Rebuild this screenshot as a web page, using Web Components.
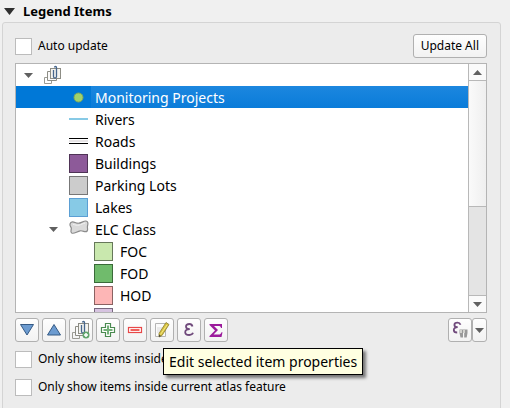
<!DOCTYPE html>
<html lang="en">
<head>
<meta charset="utf-8">
<title>Legend Items</title>
<style>
html { background: #f0f0f0; }
body { margin: 0; font: 12px/18px "Noto Sans", sans-serif; color: #000; overflow: hidden; }
</style>
</head>
<body>
<legend-panel></legend-panel>
<script>
const define = (name, html, setup) => customElements.define(name, class extends HTMLElement {
  constructor() {
    super();
    this.attachShadow({ mode: 'open' });
  }
  connectedCallback() {
    if (this.shadowRoot.childNodes.length) return;
    const t = document.createElement('template');
    t.innerHTML = '<style>*{box-sizing:border-box}</style>' + (typeof html === 'function' ? html(this) : html);
    this.shadowRoot.append(t.content.cloneNode(true));
    if (setup) setup(this);
  }
});

const clip = `<path d="M3 11.500H.5v6h7V15" fill="none" stroke="#9b9b94"/>
  <path d="M3.500 5.500v9h9v-2h-6v-7z" fill="#fafafa" stroke="#8d8d85"/>
  <rect x="6.500" y="2.500" width="10" height="10" fill="#f4f4f0" stroke="#8d8d85"/>
  <path d="M9.500 4v6.500a1.500 1.500 0 0 0 3 0v-9a1 1 0 0 0-2 0" fill="none" stroke="#46668c" stroke-width="1.300"/>`;

const icons = {
  down: `<path d="M2.500 3.500h13L9 14z" fill="#6c9bd0" stroke="#355a85"/>`,
  up: `<path d="M9 3.500l6.500 10.500h-13z" fill="#6c9bd0" stroke="#355a85"/>`,
  group: clip,
  groupadd: clip + `<circle cx="14" cy="14" r="3.500" fill="#62a56c"/><path d="M14 12v4M12 14h4" stroke="#fff" stroke-width="1.500"/>`,
  plus: `<path d="M6.500 2.500h5v4h4v5h-4v4h-5v-4h-4v-5h4z" fill="#fff" stroke="#4a8a50" stroke-width="1.200"/><path d="M9 4.500v9M4.500 9h9" stroke="#73b078" stroke-width="2"/>`,
  minus: `<rect x="2.500" y="6.500" width="13" height="5" fill="#fff" stroke="#e84848" stroke-width="1.200"/><path d="M4.500 9h9" stroke="#f0605c" stroke-width="2"/>`,
  edit: `<path d="M2.500 2.500h10v13h-10z" fill="#fbfbfb" stroke="#b5b5b5"/><path d="M4 7h6M4 9h5M4 11h4" stroke="#dadada"/><path d="M13 1.500l3 2-7 11-3 1.500V12.500z" fill="#d8c33e" stroke="#8c7c30" stroke-width=".8"/><path d="M14 4l-6.500 9.500" stroke="#f5e889"/><path d="M6 13.500V16l2-1z" fill="#444"/>`,
  epsilon: `<path d="M12.500 5.500C12 3.600 11 3 9.500 3 7.300 3 6 4.200 6 5.600S7.300 8.200 9.800 8.200C6.700 8.200 5.200 9.400 5.200 11.200S6.800 14 9.300 14 12.500 13.200 13 11.800" fill="none" stroke="#704a7c" stroke-width="1.800"/>`,
  sigma: `<path d="M2.500 3h12.500v4h-1c-.3-1.600-1-2-2.500-2H7l4 4-4.500 4.500h5c1.700 0 2.500-.8 3-2.300h1L14.500 16h-12v-1L8 9.500 2.500 4z" fill="#9c1b9c"/>`,
  epsilondata: `<path d="M9.500 3.800C8.900 2 7.800 1.700 6.500 1.700 4.500 1.700 3.400 2.700 3.400 4S4.600 6.200 6.700 6.200C4 6.200 2.800 7.200 2.800 8.900S4.200 11.500 6.200 11.500" fill="none" stroke="#704a7c" stroke-width="1.800"/><path d="M8.500 8.500h8v3.500l-.8 4.500h-2.500v-4.500H12v4.500H9.500l-1-4.500z" fill="#999"/><path d="M10 9v3M13 9v3" stroke="#e4e4de" stroke-width="1.500"/>`,
  polygon: `<path d="M1 4c1-3.500 4.500-1.600 7-.9 3.500 1 6-2.400 9-2.100 2.500.3 2 3 1.500 5s.8 3.500-.3 5c-1.700 2-4-.6-7-.2-3.200.4-6.200 3.600-8.500 2.200-1.800-1.200-.2-3-.4-4.800C2 6.700.5 5.800 1 4z" fill="#dadada" stroke="#8b8b8b" stroke-width="1.200"/><path d="M4 4.500c2 .2 4 1.200 6 .7s4-2 6-2" fill="none" stroke="#f1f1f1"/>`
};

define('tool-icon', el => `<style>:host{display:block;flex:none;width:18px;height:18px}svg{display:block;overflow:visible}</style>
<svg width="18" height="18" viewBox="0 0 18 18" aria-hidden="true">${icons[el.getAttribute('name')]}</svg>`);

define('caret-mark', `<style>:host{display:block;flex:none;width:9px;height:5px;color:#606060}:host([up]){transform:scaleY(-1)}:host([large]){width:11px;height:7px;color:#303030}svg{display:block;width:100%;height:100%}</style>
<svg viewBox="0 0 10 6" preserveAspectRatio="none" aria-hidden="true"><path d="M0 0h10L5 6z" fill="currentColor"/></svg>`);

define('push-button', el => `<style>
:host{display:block;flex:none}
button{display:flex;align-items:center;justify-content:center;width:100%;min-width:24px;height:24px;padding:0 2px;margin:0;font:inherit;color:inherit;border:1px solid #b0b0b0;border-radius:3px;background:linear-gradient(#fefefe,#f2f2f2)}
:host([text]) button{padding:0 7px}
:host([narrow]) button{min-width:15px;padding:0}
</style><button type="button" aria-label="${el.getAttribute('label')}"><slot></slot></button>`);

define('check-option', `<style>
:host{display:block}
label{display:flex;align-items:center;gap:6px;white-space:nowrap}
input{appearance:none;flex:none;width:17px;height:17px;margin:0;background:#fff;border:1px solid #bcbcbc}
input:checked{background:#0078d7}
</style><label><input type="checkbox"><span><slot></slot></span></label>`);

define('legend-symbol', el => {
  const k = el.getAttribute('kind');
  const art = {
    point: '<circle cx="9.500" cy="9.500" r="4.500" fill="#a0d26c" stroke="#80a85c"/>',
    line: '<path d="M0 9h19" stroke="#87cae6" stroke-width="2"/>',
    road: '<path d="M0 9h19" stroke="#d0cacd"/><path d="M0 6.500h19M0 11.500h19" stroke="#000" stroke-width="1.200"/>',
    fill: '<rect x=".5" y=".5" width="18" height="18" fill="var(--fill)" stroke="var(--edge)"/>',
    polygon: icons.polygon
  }[k];
  return `<style>:host{display:block;flex:none;width:19px;height:19px;margin-top:1px}svg{display:block;overflow:visible}</style><svg width="19" height="19" viewBox="0 0 19 19" aria-hidden="true">${art}</svg>`;
});

define('tree-row', `<style>
:host{display:flex;align-items:center;height:22px;padding-left:calc(var(--level,0)*25px + 8px);font:14px/24px "Noto Sans",sans-serif;white-space:nowrap}
.mark{flex:none;display:flex;width:20px}
.name{flex:1;padding-left:4px;margin-left:3px;height:22px}
:host([selected]){background:#0078d7;color:#fff}
:host([selected]) .name{background:linear-gradient(#1c87df,#0a7cd9)}
</style><span class="mark"><slot name="mark"></slot></span><slot name="icon"></slot><span class="name"><slot></slot></span>`,
el => el.setAttribute('role', 'treeitem'));

define('scroll-strip', `<style>
:host{display:flex;flex-direction:column;flex:none;width:18px;border-left:1px solid #b8b8b8;background:#e4e4e4}
button{flex:none;display:flex;align-items:center;justify-content:center;height:17px;padding:0;margin:0;border:0;border-bottom:1px solid #b8b8b8;background:#fafafa}
button:last-child{border-bottom:0;border-top:1px solid #b8b8b8}
.track{flex:1}
.thumb{height:59%;border-bottom:1px solid #b8b8b8;background:linear-gradient(90deg,#fafafa,#efefef)}
</style><button type="button" aria-label="Scroll up"><caret-mark up></caret-mark></button><div class="track"><div class="thumb"></div></div><button type="button" aria-label="Scroll down"><caret-mark></caret-mark></button>`);

define('legend-tree', `<style>
:host{display:flex;height:250px;box-sizing:border-box;background:#fff;border:1px solid #b4b4b4}
.rows{flex:1;min-width:0;overflow:hidden}
</style><div class="rows" role="tree" aria-label="Legend items"><slot></slot></div><scroll-strip></scroll-strip>`);

define('hover-tip', `<style>
:host{display:block;padding:1px 5px 0;font:14px/24px "Noto Sans",sans-serif;white-space:nowrap;background:#ffffe1;border:1px solid #000;box-shadow:3px 3px 3px rgba(0,0,0,.5)}
</style><slot></slot>`);

define('legend-panel', `<style>
:host{display:block;padding:1px 9px 0 2px}
h2{display:flex;align-items:center;gap:8px;margin:0;padding:0 2px;font-size:13px;font-weight:bold;line-height:20px}
section{margin-top:1px;padding:11px 13px 24px 12px;background:#ececec;border:1px solid #d4d4d4;border-radius:3px}
.top{display:flex;justify-content:space-between;align-items:center;margin-bottom:5px}
.tools{display:flex;gap:3px;margin:5px 0 8px}
.data{display:flex;margin-left:auto}
.options{position:relative;display:grid;gap:10px}
hover-tip{position:absolute;left:148px;top:-2px}
</style>
<h2><caret-mark large></caret-mark>Legend Items</h2>
<section>
<div class="top"><check-option>Auto update</check-option><push-button text label="Update All">Update All</push-button></div>
<legend-tree>
<tree-row><caret-mark slot="mark"></caret-mark><tool-icon slot="icon" name="group"></tool-icon></tree-row>
<tree-row selected style="--level:1"><legend-symbol slot="icon" kind="point"></legend-symbol>Monitoring Projects</tree-row>
<tree-row style="--level:1"><legend-symbol slot="icon" kind="line"></legend-symbol>Rivers</tree-row>
<tree-row style="--level:1"><legend-symbol slot="icon" kind="road"></legend-symbol>Roads</tree-row>
<tree-row style="--level:1"><legend-symbol slot="icon" kind="fill" style="--fill:#8d5a99;--edge:#4f3356"></legend-symbol>Buildings</tree-row>
<tree-row style="--level:1"><legend-symbol slot="icon" kind="fill" style="--fill:#cccccc;--edge:#777"></legend-symbol>Parking Lots</tree-row>
<tree-row style="--level:1"><legend-symbol slot="icon" kind="fill" style="--fill:#87cae6;--edge:#5b9fd4"></legend-symbol>Lakes</tree-row>
<tree-row style="--level:1"><caret-mark slot="mark"></caret-mark><legend-symbol slot="icon" kind="polygon"></legend-symbol>ELC Class</tree-row>
<tree-row style="--level:2"><legend-symbol slot="icon" kind="fill" style="--fill:#c9e8ae;--edge:#66785a"></legend-symbol>FOC</tree-row>
<tree-row style="--level:2"><legend-symbol slot="icon" kind="fill" style="--fill:#70bb6c;--edge:#3a6a39"></legend-symbol>FOD</tree-row>
<tree-row style="--level:2"><legend-symbol slot="icon" kind="fill" style="--fill:#fdb6b6;--edge:#8a6262"></legend-symbol>HOD</tree-row>
<tree-row style="--level:2"><legend-symbol slot="icon" kind="fill" style="--fill:#d6c3e0;--edge:#77687f"></legend-symbol></tree-row>
</legend-tree>
<div class="tools">
<push-button label="Move item down"><tool-icon name="down"></tool-icon></push-button>
<push-button label="Move item up"><tool-icon name="up"></tool-icon></push-button>
<push-button label="Add group"><tool-icon name="groupadd"></tool-icon></push-button>
<push-button label="Add layer"><tool-icon name="plus"></tool-icon></push-button>
<push-button label="Remove item"><tool-icon name="minus"></tool-icon></push-button>
<push-button label="Edit selected item properties"><tool-icon name="edit"></tool-icon></push-button>
<push-button label="Expression"><tool-icon name="epsilon"></tool-icon></push-button>
<push-button label="Feature count"><tool-icon name="sigma"></tool-icon></push-button>
<div class="data"><push-button label="Filter by expression"><tool-icon name="epsilondata"></tool-icon></push-button><push-button narrow label="Filter menu"><caret-mark></caret-mark></push-button></div>
</div>
<div class="options">
<check-option>Only show items inside</check-option>
<check-option>Only show items inside current atlas feature</check-option>
<hover-tip role="tooltip">Edit selected item properties</hover-tip>
</div>
</section>`);
</script>
</body>
</html>
